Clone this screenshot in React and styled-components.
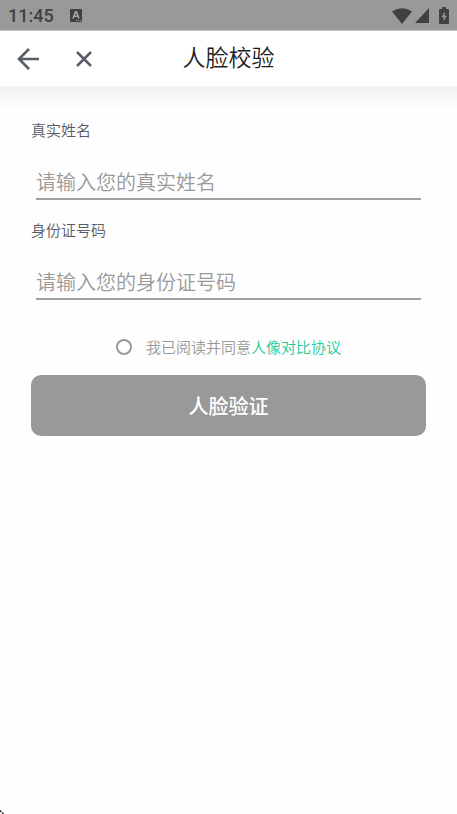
import React, { useState } from "react";
import styled, { createGlobalStyle } from "styled-components";

const GlobalStyle = createGlobalStyle`
  * { box-sizing: border-box; }
  body {
    margin: 0;
    background: #fefefe;
    font-family: "Noto Sans CJK SC", sans-serif;
    font-weight: 350;
  }
`;

const Page = styled.div`
  display: flex;
  flex-direction: column;
  min-height: 100vh;
`;

const StatusBar = styled.div`
  display: flex;
  align-items: center;
  height: 31px;
  padding: 1px 8px 0;
  background: #999;
  border-bottom: 1px solid #c4c4c4;
  color: #404040;
`;

const Clock = styled.time`
  font: 500 18px/24px Roboto, sans-serif;
`;

const NoticeIcon = styled.svg`
  width: 12px;
  height: 13px;
  margin-left: 16px;
`;

const StatusIcons = styled.div`
  display: flex;
  align-items: center;
  margin-left: auto;
`;

const WifiIcon = styled.svg`
  width: 20px;
  height: 16px;
`;

const SignalIcon = styled.svg`
  width: 14px;
  height: 15px;
  margin-left: 3px;
`;

const BatteryIcon = styled.svg`
  width: 10px;
  height: 17px;
  margin-left: 10px;
`;

const Header = styled.header`
  display: grid;
  grid-template-columns: 1fr auto 1fr;
  align-items: center;
  height: 55px;
  background: #fff;
`;

const HeaderActions = styled.div`
  display: flex;
`;

const IconButton = styled.button`
  display: flex;
  align-items: center;
  justify-content: center;
  width: 56px;
  height: 55px;
  padding: 0;
  border: 0;
  background: none;
  color: #575c66;
`;

const Title = styled.h1`
  margin: 0;
  padding-bottom: 6px;
  color: #1c1d24;
  font-size: 23px;
  font-weight: 350;
  line-height: 32px;
`;

const Form = styled.form`
  flex: 1;
  padding: 32px 31px 0;
  background: linear-gradient(#f2f2f2, #fefefe 24px);
`;

const Field = styled.div`
  display: flex;
  flex-direction: column;
  height: 100px;
`;

const Label = styled.label`
  color: #575c66;
  font-size: 15px;
  line-height: 24px;
`;

const TextInput = styled.input`
  height: 40px;
  margin: 18px 5px 0;
  padding: 4px 0 0;
  border: 0;
  border-bottom: 2px solid #a0a0a0;
  border-radius: 0;
  outline: 0;
  background: transparent;
  color: #1c1d24;
  font-family: inherit;
  font-size: 20px;
  font-weight: 350;

  &::placeholder {
    color: #999;
    opacity: 1;
  }
`;

const Agreement = styled.div`
  display: flex;
  align-items: center;
  justify-content: center;
  height: 32px;
  margin-top: 13px;
  color: #999;
  font-size: 15px;
  line-height: 24px;
`;

const RoundCheck = styled.input`
  appearance: none;
  width: 16px;
  height: 16px;
  margin: 0 14px 0 0;
  border: 2px solid #999;
  border-radius: 50%;

  &:checked {
    background: #1dcb9b;
    border-color: #1dcb9b;
  }
`;

const AgreementLink = styled.a`
  color: #1dcb9b;
  text-decoration: none;
`;

const SubmitButton = styled.button`
  display: block;
  width: 100%;
  height: 61px;
  margin-top: 12px;
  padding: 0;
  border: 0;
  border-radius: 10px;
  background: #999;
  color: #fff;
  font-family: inherit;
  font-size: 20px;
  font-weight: 500;
`;

const CornerMark = styled.svg`
  position: fixed;
  left: 0;
  bottom: 0;
  width: 4px;
  height: 4px;
`;

function TextField({ id, label, placeholder }) {
  return (
    <Field>
      <Label htmlFor={id}>{label}</Label>
      <TextInput id={id} type="text" placeholder={placeholder} />
    </Field>
  );
}

export default function App() {
  const [agreed, setAgreed] = useState(false);

  return (
    <Page>
      <GlobalStyle />
      <StatusBar>
        <Clock>11:45</Clock>
        <NoticeIcon viewBox="0 0 12 13" aria-hidden="true">
          <rect width="12" height="13" rx="1" fill="#404040" />
          <path d="M3 9.5 L5.5 3 H6.5 L9 9.5 M4 7.3 H8" fill="none" stroke="#a8a8a8" strokeWidth="1.6" />
          <path d="M6 11.5h1M8 11.5h1M10 11.5h1" stroke="#a8a8a8" />
        </NoticeIcon>
        <StatusIcons>
          <WifiIcon viewBox="0 0 20 16" aria-hidden="true">
            <path d="M0 3.6Q10-3.2 20 3.6L10 16Z" fill="#404040" />
          </WifiIcon>
          <SignalIcon viewBox="0 0 14 15" aria-hidden="true">
            <path d="M14 0v15H0Z" fill="#404040" />
          </SignalIcon>
          <BatteryIcon viewBox="0 0 10 17" aria-hidden="true">
            <path d="M3 0h4v2h2q1 0 1 1v13q0 1-1 1H1q-1 0-1-1V3q0-1 1-1h2Z" fill="#404040" />
            <path d="M6 4.5 2.5 10H4.5V14.5L7.8 8.7H5.7Z" fill="#999" />
          </BatteryIcon>
        </StatusIcons>
      </StatusBar>
      <Header>
        <HeaderActions>
          <IconButton type="button" aria-label="返回">
            <svg width="24" height="24" viewBox="0 0 24 24" fill="none" stroke="currentColor" strokeWidth="2.6">
              <path d="M23 12H3M13 2 3 12l10 10" />
            </svg>
          </IconButton>
          <IconButton type="button" aria-label="关闭">
            <svg width="16" height="16" viewBox="0 0 16 16" fill="none" stroke="currentColor" strokeWidth="2.5">
              <path d="M1 1l14 14M15 1 1 15" />
            </svg>
          </IconButton>
        </HeaderActions>
        <Title>人脸校验</Title>
      </Header>
      <Form onSubmit={(event) => event.preventDefault()}>
        <TextField id="name" label="真实姓名" placeholder="请输入您的真实姓名" />
        <TextField id="idNumber" label="身份证号码" placeholder="请输入您的身份证号码" />
        <Agreement>
          <RoundCheck
            id="agree"
            type="checkbox"
            checked={agreed}
            onChange={(event) => setAgreed(event.target.checked)}
          />
          <label htmlFor="agree">我已阅读并同意</label>
          <AgreementLink href="#agreement">人像对比协议</AgreementLink>
        </Agreement>
        <SubmitButton type="submit">人脸验证</SubmitButton>
      </Form>
      <CornerMark viewBox="0 0 4 4" aria-hidden="true">
        <path d="M0 0.5 3.5 4" stroke="#222" strokeWidth="1.4" strokeDasharray="2 1" />
      </CornerMark>
    </Page>
  );
}
